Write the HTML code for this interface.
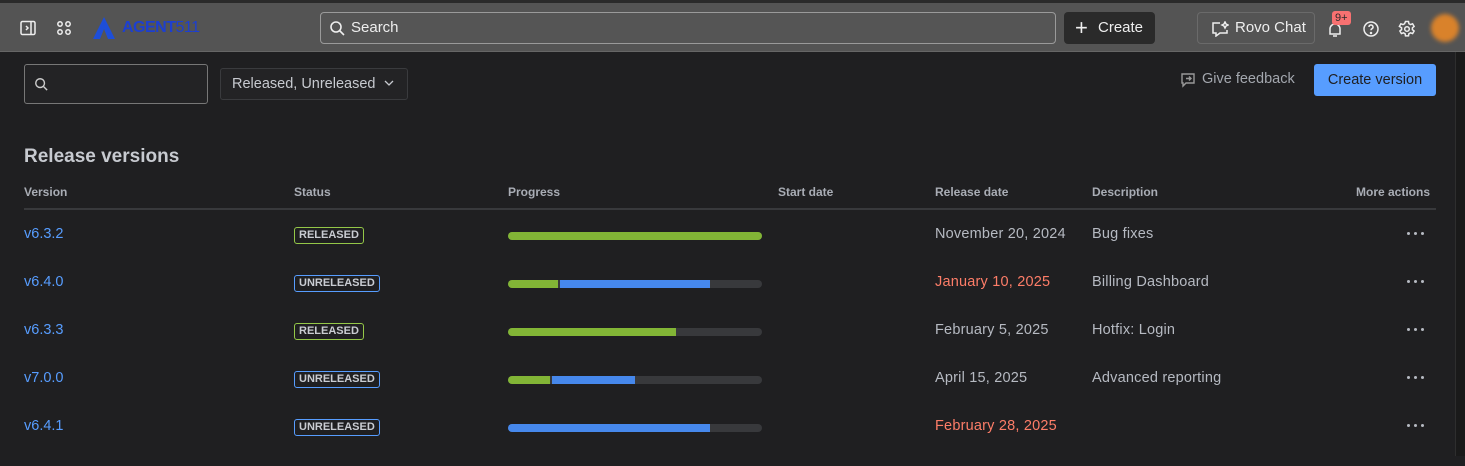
<!DOCTYPE html>
<html><head><meta charset="utf-8"><style>
*{box-sizing:border-box;margin:0;padding:0}
html,body{width:1465px;height:456px}
body{background:#1f1f21;font-family:"Liberation Sans",sans-serif;color:#b6bac2;position:relative;overflow:hidden;font-size:14px}
.top{position:absolute;left:0;top:0;width:1465px;height:52px;background:#545454;border-top:3px solid #2a2a2a;border-bottom:1px solid #666}
.abs{position:absolute}
.search{left:320px;top:9px;width:736px;height:32px;border:1px solid #9a9a9a;border-radius:4px;background:#555;color:#eee;font-size:15px;line-height:30px;padding-left:30px}
.btn{border-radius:4px;color:#eee;font-size:14px}
.th{position:absolute;top:184px;font-size:12px;font-weight:bold;color:#a9adb5}
.row{position:absolute;left:0;width:1465px;height:48px;font-size:14.5px}
.v{position:absolute;left:24px;color:#579dff;top:0}
.lz{position:absolute;left:294px;top:1px;font-size:11px;font-weight:bold;color:#c9ccd2;border:1px solid;border-radius:3px;padding:1px 4px;line-height:13px}
.bar{position:absolute;left:508px;top:5px;width:254px;height:8px;border-radius:4px;background:#38393c;overflow:hidden}
.bar i{position:absolute;top:0;height:8px}
.d{position:absolute;left:935px;top:0;letter-spacing:0.2px}
.ds{position:absolute;left:1092px;top:0;letter-spacing:0.2px}
.m{position:absolute;left:1407px;top:6px;width:18px;height:4px}
.m b{position:absolute;top:0;width:3px;height:3px;border-radius:50%;background:#b6bac2}
</style></head><body>
<div class="top">
 <svg class="abs" style="left:20px;top:17px" width="16" height="16" viewBox="0 0 16 16" fill="none" stroke="#eee" stroke-width="1.5"><rect x="1" y="1.5" width="14" height="13" rx="1.5"/><path d="M11 2v12M6 6l2 2-2 2"/></svg>
 <svg class="abs" style="left:56px;top:17px" width="16" height="16" viewBox="0 0 16 16" fill="none" stroke="#eee" stroke-width="1.5"><circle cx="4" cy="4" r="2.2"/><circle cx="12" cy="4" r="2.2"/><circle cx="4" cy="12" r="2.2"/><circle cx="12" cy="12" r="2.2"/></svg>
 <svg class="abs" style="left:92px;top:13px" width="24" height="24" viewBox="0 0 24 24"><path d="M12 1L1 23h7L12 13l4 10h7z" fill="#1d4ed8"/></svg>
 <div class="abs" style="left:122px;top:16px;color:#1d3fd0;font-weight:bold;font-size:16px;letter-spacing:-0.5px">AGENT<span style="font-weight:normal">511</span></div>
 <div class="abs search">Search</div>
 <svg class="abs" style="left:329px;top:17px" width="16" height="16" viewBox="0 0 16 16" fill="none" stroke="#eee" stroke-width="1.6"><circle cx="7" cy="7" r="5"/><path d="M11 11l4 4"/></svg>
 <div class="abs btn" style="left:1064px;top:9px;width:91px;height:32px;background:#2a2a2a;line-height:32px;padding-left:34px;font-size:15px">Create</div>
 <div class="abs" style="left:1075px;top:13px;color:#eee;font-size:22px;line-height:24px">+</div>
 <div class="abs btn" style="left:1197px;top:9px;width:118px;height:32px;border:1px solid #6a6a6a;line-height:30px;padding-left:37px;font-size:15px">Rovo Chat</div>
 <svg class="abs" style="left:1211px;top:18px" width="18" height="16" viewBox="0 0 18 16" fill="none" stroke="#eee" stroke-width="1.5"><path d="M9 2H2v10h3v3l4-3h7V9"/><path d="M14 1l1 2 2 1-2 1-1 2-1-2-2-1 2-1z"/></svg>
 <svg class="abs" style="left:1327px;top:19px" width="16" height="16" viewBox="0 0 16 16" fill="none" stroke="#eee" stroke-width="1.5"><path d="M3 12V7a5 5 0 0110 0v5H3zM6 14h4"/></svg>
 <div class="abs" style="left:1332px;top:8px;background:#f87171;color:#2a2a2a;font-size:11px;padding:0 3px;border-radius:3px;line-height:14px">9+</div>
 <svg class="abs" style="left:1362px;top:17px" width="18" height="18" viewBox="0 0 18 18" fill="none" stroke="#eee" stroke-width="1.5"><circle cx="9" cy="9" r="7"/><path d="M7 7a2 2 0 113 1.7c-.7.4-1 .8-1 1.5"/><circle cx="9" cy="13" r=".5" fill="#eee"/></svg>
 <svg class="abs" style="left:1398px;top:17px" width="18" height="18" viewBox="0 0 18 18" fill="none" stroke="#eee" stroke-width="1.5"><path d="M7.5 1.5h3l.4 2.2 1.6.9 2.1-.8 1.5 2.6-1.7 1.4v1.8l1.7 1.4-1.5 2.6-2.1-.8-1.6.9-.4 2.2h-3l-.4-2.2-1.6-.9-2.1.8-1.5-2.6 1.7-1.4V7.8L1.4 6.4l1.5-2.6 2.1.8 1.6-.9z"/><circle cx="9" cy="9" r="2.3"/></svg>
 <div class="abs" style="left:1431px;top:11px;width:28px;height:28px;border-radius:50%;background:#d9822b;filter:blur(2px)"></div>
</div>
<div class="abs" style="left:1455px;top:52px;width:10px;height:404px;background:#1a1a1a;border-left:1px solid #2e2e2e"></div>
<div class="abs" style="left:24px;top:64px;width:184px;height:40px;border:1px solid #777;border-radius:3px;background:#232325"></div>
<svg class="abs" style="left:34px;top:77px" width="14" height="14" viewBox="0 0 16 16" fill="none" stroke="#ccc" stroke-width="1.6"><circle cx="7" cy="7" r="5"/><path d="M11 11l4 4"/></svg>
<div class="abs" style="left:220px;top:68px;width:188px;height:32px;border:1px solid #3a3b3e;border-radius:3px;background:#232325;line-height:30px;padding-left:11px;color:#c7cad0;font-size:14.5px">Released, Unreleased</div>
<svg class="abs" style="left:384px;top:80px" width="10" height="6" viewBox="0 0 10 6" fill="none" stroke="#c7cad0" stroke-width="1.3"><path d="M1 1l4 4 4-4"/></svg>
<svg class="abs" style="left:1180px;top:72px" width="16" height="16" viewBox="0 0 16 16" fill="none" stroke="#999" stroke-width="1.4"><path d="M2 2h12v9H6l-3 3v-3H2z"/><path d="M6 6.5h5M9 4.5l2 2-2 2"/></svg>
<div class="abs" style="left:1202px;top:71px;color:#a3a7ae;font-size:14.5px">Give feedback</div>
<div class="abs" style="left:1314px;top:64px;width:122px;height:32px;background:#579dff;border-radius:3px;color:#1f1f21;line-height:32px;text-align:center;font-size:14.5px">Create version</div>
<div class="abs" style="left:24px;top:146px;font-size:19px;font-weight:bold;color:#c7cad0">Release versions</div>
<div class="th" style="left:24px;top:185px">Version</div><div class="th" style="left:294px;top:185px">Status</div><div class="th" style="left:508px;top:185px">Progress</div><div class="th" style="left:778px;top:185px">Start date</div><div class="th" style="left:935px;top:185px">Release date</div><div class="th" style="left:1092px;top:185px">Description</div><div class="th" style="left:1356px;top:185px">More actions</div>
<div class="abs" style="left:24px;top:208px;width:1412px;height:2px;background:#38393c"></div>

<div class="row" style="top:226px"><span class="v">v6.3.2</span><span class="lz" style="top:1px;border-color:#94c748">RELEASED</span><div class="bar" style="top:6px"><i style="left:0;width:254px;background:#82b536"></i></div><span class="d">November 20, 2024</span><span class="ds">Bug fixes</span><span class="m"><b style="left:0"></b><b style="left:7px"></b><b style="left:14px"></b></span></div>
<div class="row" style="top:274px"><span class="v">v6.4.0</span><span class="lz" style="border-color:#579dff">UNRELEASED</span><div class="bar" style="top:6px"><i style="left:0;width:50px;background:#82b536"></i><i style="left:52px;width:150px;background:#4688ec"></i></div><span class="d" style="color:#fd7d68">January 10, 2025</span><span class="ds">Billing Dashboard</span><span class="m"><b style="left:0"></b><b style="left:7px"></b><b style="left:14px"></b></span></div>
<div class="row" style="top:322px"><span class="v">v6.3.3</span><span class="lz" style="border-color:#94c748">RELEASED</span><div class="bar" style="top:6px"><i style="left:0;width:168px;background:#82b536"></i></div><span class="d">February 5, 2025</span><span class="ds">Hotfix: Login</span><span class="m"><b style="left:0"></b><b style="left:7px"></b><b style="left:14px"></b></span></div>
<div class="row" style="top:370px"><span class="v">v7.0.0</span><span class="lz" style="border-color:#579dff">UNRELEASED</span><div class="bar" style="top:6px"><i style="left:0;width:42px;background:#82b536"></i><i style="left:44px;width:83px;background:#4688ec"></i></div><span class="d">April 15, 2025</span><span class="ds">Advanced reporting</span><span class="m"><b style="left:0"></b><b style="left:7px"></b><b style="left:14px"></b></span></div>
<div class="row" style="top:418px"><span class="v">v6.4.1</span><span class="lz" style="border-color:#579dff">UNRELEASED</span><div class="bar" style="top:6px"><i style="left:0;width:202px;background:#4688ec"></i></div><span class="d" style="color:#fd7d68">February 28, 2025</span><span class="m"><b style="left:0"></b><b style="left:7px"></b><b style="left:14px"></b></span></div>
</body></html>
